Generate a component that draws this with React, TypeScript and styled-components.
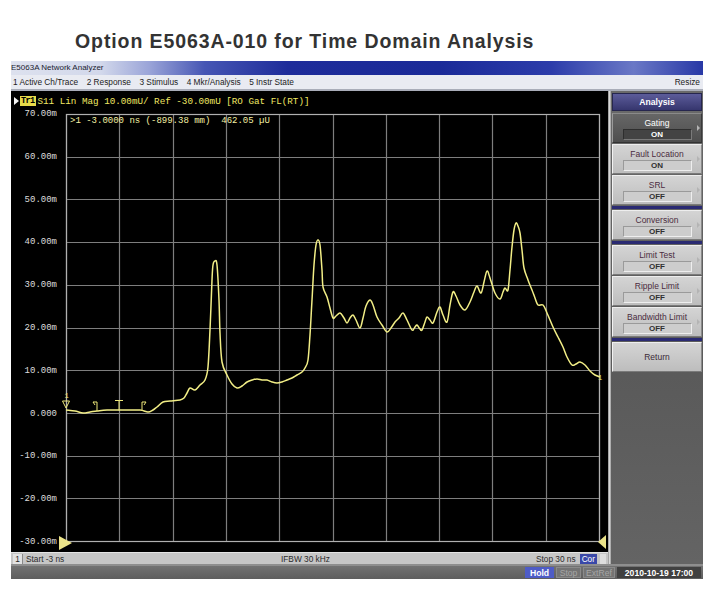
import React from "react";
import styled, { createGlobalStyle } from "styled-components";

const UI_FONT = `"Liberation Sans", Arial, sans-serif`;
const MONO_FONT = `"Liberation Mono", "DejaVu Sans Mono", monospace`;

// plot geometry (page pixels)
const PLOT_X = 66;
const PLOT_Y = 114;
const PLOT_W = 533;
const PLOT_H = 427;
const DIVS = 10;

const Y_LABELS = [
  "70.00m",
  "60.00m",
  "50.00m",
  "40.00m",
  "30.00m",
  "20.00m",
  "10.00m",
  "0.000",
  "-10.00m",
  "-20.00m",
  "-30.00m",
];

const MENU_ITEMS = [
  "1 Active Ch/Trace",
  "2 Response",
  "3 Stimulus",
  "4 Mkr/Analysis",
  "5 Instr State",
];

const SOFT_KEYS = [
  { label: "Gating", value: "ON", active: true },
  { label: "Fault Location", value: "ON" },
  { label: "SRL", value: "OFF", separatorAfter: true },
  { label: "Conversion", value: "OFF", separatorAfter: true },
  { label: "Limit Test", value: "OFF" },
  { label: "Ripple Limit", value: "OFF" },
  { label: "Bandwidth Limit", value: "OFF", separatorAfter: true },
];

// trace read off the screen, in page pixels
const TRACE: [number, number][] = [
  [66, 410], [75, 411], [83, 413], [90, 412], [97, 411], [107, 410],
  [125, 410], [140, 410], [148, 412], [153, 410], [157, 407], [163, 402],
  [170, 401], [180, 400], [184, 398], [187, 393], [190, 388], [195, 390],
  [200, 385], [205, 380], [208, 367], [210, 330], [212, 280], [213, 265],
  [215, 261], [217, 265], [219, 300], [220, 333], [222, 362], [227, 375],
  [232, 384], [237, 388], [242, 386], [247, 382], [252, 380], [257, 379],
  [262, 380], [267, 380], [272, 382], [277, 383], [282, 382], [287, 380],
  [292, 378], [297, 375], [302, 372], [305, 368], [308, 360], [310, 335],
  [312, 300], [314, 265], [316, 245], [318, 240], [320, 245], [322, 270],
  [323, 287], [327, 297], [330, 308], [333, 318], [336, 316], [340, 313],
  [344, 318], [347, 323], [350, 318], [353, 315], [356, 320], [360, 328],
  [363, 318], [366, 306], [370, 300], [373, 305], [377, 317], [382, 325],
  [387, 332], [391, 328], [395, 322], [399, 318], [403, 313], [407, 320],
  [412, 330], [415, 327], [417, 325], [420, 329], [422, 330], [425, 322],
  [427, 317], [430, 320], [433, 323], [437, 312], [440, 307], [443, 315],
  [447, 322], [450, 305], [453, 292], [456, 296], [460, 305], [465, 310],
  [470, 302], [474, 292], [477, 286], [481, 293], [484, 282], [487, 271],
  [490, 278], [495, 293], [500, 299], [503, 292], [505, 288], [508, 290],
  [510, 270], [512, 247], [514, 230], [516, 223], [518, 226], [520, 233],
  [522, 250], [524, 268], [528, 280], [532, 290], [535, 298], [538, 305],
  [543, 305], [547, 313], [553, 327], [558, 337], [563, 347], [567, 357],
  [572, 365], [576, 364], [580, 362], [585, 365], [590, 371], [595, 375],
  [600, 377],
];

const smoothPath = (pts: [number, number][]) => {
  const p = pts.map(([x, y]) => [x - PLOT_X, y - PLOT_Y]);
  let d = `M${p[0][0]},${p[0][1]}`;
  for (let i = 0; i < p.length - 1; i++) {
    const p0 = p[i - 1] || p[i];
    const p1 = p[i];
    const p2 = p[i + 1];
    const p3 = p[i + 2] || p2;
    const c1x = p1[0] + (p2[0] - p0[0]) / 6;
    const c1y = p1[1] + (p2[1] - p0[1]) / 6;
    const c2x = p2[0] - (p3[0] - p1[0]) / 6;
    const c2y = p2[1] - (p3[1] - p1[1]) / 6;
    d += ` C${c1x.toFixed(1)},${c1y.toFixed(1)} ${c2x.toFixed(1)},${c2y.toFixed(
      1
    )} ${p2[0]},${p2[1]}`;
  }
  return d;
};

const GlobalStyle = createGlobalStyle`
  html, body {
    margin: 0;
    padding: 0;
    background: #ffffff;
  }
  body {
    font-family: ${UI_FONT};
  }
`;

const Page = styled.div`
  width: 716px;
  height: 600px;
  overflow: hidden;
  background: #ffffff;
`;

const Heading = styled.h1`
  margin: 0 0 10px 75px;
  padding-top: 31px;
  font-size: 19.5px;
  line-height: 20px;
  letter-spacing: 0.9px;
  font-weight: bold;
  color: #333333;
`;

const Window = styled.div`
  margin-left: 11px;
  width: 692px;
  display: flex;
  flex-direction: column;
`;

const TitleBar = styled.div`
  height: 14px;
  line-height: 14px;
  font-size: 8px;
  color: #1c1c30;
  background: linear-gradient(
    to right,
    #dde1ee 0%,
    #d2d8eb 13%,
    #9aa4d8 20%,
    #4656b4 28%,
    #1e2c9a 40%,
    #1a2a98 62%,
    #2c3caa 78%,
    #6a78c6 90%,
    #2838a6 100%
  );
`;

const MenuBar = styled.div`
  height: 14px;
  display: flex;
  align-items: center;
  gap: 8.5px;
  padding: 0 3px 0 2px;
  background: #e9ebf2;
  border-bottom: 2px solid #a9adb9;
  font-size: 8.3px;
  color: #222222;
`;

const MenuItem = styled.span<{ $right?: boolean }>`
  white-space: nowrap;
  margin-left: ${(p) => (p.$right ? "auto" : "0")};
`;

const MainRow = styled.div`
  display: flex;
  height: 473px;
`;

const LeftColumn = styled.div`
  width: 597px;
  display: flex;
  flex-direction: column;
`;

const Screen = styled.div`
  height: 461px;
  background: #000000;
  display: flex;
  flex-direction: column;
`;

const TraceHeader = styled.div`
  height: 12px;
  padding: 4px 0 2px 3px;
  display: flex;
  align-items: center;
  font-family: ${MONO_FONT};
  font-size: 9.25px;
  color: #f0e864;
  white-space: pre;
`;

const ActiveArrow = styled.span`
  width: 0;
  height: 0;
  border-left: 5px solid #f4f4f4;
  border-top: 4px solid transparent;
  border-bottom: 4px solid transparent;
  margin-right: 1px;
`;

const TraceTag = styled.span`
  background: #e8dc4a;
  color: #000000;
  font-weight: bold;
  font-size: 8.5px;
  letter-spacing: -0.6px;
  line-height: 10px;
  padding: 0 1px;
  margin-right: 2px;
`;

const ChartRow = styled.div`
  display: flex;
  height: 438px;
`;

const YAxis = styled.div`
  width: 55px;
  box-sizing: border-box;
  padding-right: 9px;
  display: flex;
  flex-direction: column;
  justify-content: space-between;
  align-items: flex-end;
`;

const YLabel = styled.span`
  font-family: ${MONO_FONT};
  font-size: 9px;
  line-height: 10px;
  color: #dedede;
  white-space: pre;
`;

const PlotWrap = styled.div`
  position: relative;
  padding: 5px 0;

  svg {
    display: block;
    overflow: visible;
  }
`;

const MarkerReadout = styled.div`
  position: absolute;
  left: 4px;
  top: 7px;
  font-family: ${MONO_FONT};
  font-size: 9px;
  line-height: 10px;
  color: #f4f0a4;
  white-space: pre;
`;

const StatusLine = styled.div`
  height: 12px;
  box-sizing: border-box;
  border-top: 1px solid #e4e4e4;
  background: #c6c6c6;
  display: flex;
  align-items: center;
  font-size: 8.3px;
  color: #2a2a2a;
  white-space: nowrap;
`;

const ChannelBox = styled.span`
  width: 9px;
  height: 10px;
  margin-left: 2px;
  background: #e2e2e2;
  border-right: 1px solid #8a8a8a;
  line-height: 10px;
  text-align: center;
`;

const StatusCell = styled.span<{ $width?: number }>`
  ${(p) => (p.$width ? `width: ${p.$width}px;` : "flex: 1;")}
  padding-left: 3px;
  box-sizing: border-box;
`;

const CorBox = styled.span`
  margin: 0 3px 0 4px;
  padding: 0 2px;
  line-height: 10px;
  background: #3a48a8;
  color: #ffffff;
`;

const TinyBox = styled.span`
  width: 6px;
  height: 10px;
  background: #dedede;
  margin-right: 2px;
`;

const Divider = styled.div`
  width: 3px;
  background: linear-gradient(to right, #8c8c8c, #d8d8d8, #9a9a9a);
`;

const SoftKeyPanel = styled.div`
  width: 92px;
  box-sizing: border-box;
  padding: 2px 1px 0;
  background: linear-gradient(#6a6a6a, #5a5a5a 60%, #646464);
  display: flex;
  flex-direction: column;
`;

const PanelTitle = styled.div`
  height: 18px;
  box-sizing: border-box;
  border: 1px solid #26264e;
  background: linear-gradient(#5c5c9a, #36366e);
  color: #ffffff;
  font-size: 8.6px;
  font-weight: bold;
  line-height: 16px;
  text-align: center;
  margin-bottom: 1px;
`;

const SoftKey = styled.div<{ $active?: boolean }>`
  position: relative;
  height: 30px;
  margin-top: 1px;
  box-sizing: border-box;
  padding-top: 4px;
  display: flex;
  flex-direction: column;
  align-items: center;
  border: 1px solid;
  border-color: ${(p) =>
    p.$active ? "#8a8a8a #3a3a3a #333333 #9a9a9a" : "#eeeeee #8a8a8a #7a7a7a #f2f2f2"};
  background: ${(p) =>
    p.$active
      ? "linear-gradient(#666666, #4e4e4e)"
      : "linear-gradient(#d4d4d4, #bdbdbd)"};
  color: ${(p) => (p.$active ? "#ffffff" : "#4a2c40")};
  font-size: 8.5px;
  line-height: 10px;
  white-space: nowrap;
`;

const KeyValue = styled.div<{ $active?: boolean }>`
  width: 69px;
  height: 11px;
  box-sizing: border-box;
  margin-top: 1px;
  border: 1px solid;
  border-color: ${(p) =>
    p.$active ? "#2e2e2e #7a7a7a #7a7a7a #2e2e2e" : "#9a9a9a #eeeeee #eeeeee #9a9a9a"};
  background: ${(p) => (p.$active ? "#434343" : "#cdcdcd")};
  color: ${(p) => (p.$active ? "#ffffff" : "#303030")};
  font-size: 8px;
  font-weight: bold;
  line-height: 9px;
  text-align: center;
`;

const KeyArrow = styled.span`
  position: absolute;
  right: 1px;
  top: 11px;
  width: 0;
  height: 0;
  border-left: 3px solid #b4b4b4;
  border-top: 3.5px solid transparent;
  border-bottom: 3.5px solid transparent;
`;

const ReturnKey = styled(SoftKey)`
  padding-top: 0;
  justify-content: center;
  color: #3a2a36;
`;

const KeySeparator = styled.div`
  height: 3px;
  margin-top: 1px;
  background: #2a2a72;
`;

const BottomBar = styled.div`
  height: 15px;
  box-sizing: border-box;
  border-top: 2px solid #8e8e8e;
  background: linear-gradient(#727272, #5e5e5e);
  display: flex;
  justify-content: flex-end;
  align-items: center;
  gap: 2px;
  padding-right: 2px;
  font-size: 8.6px;
  white-space: nowrap;
`;

const BarItem = styled.span<{ $width: number; $tone: "hold" | "dim" | "date" }>`
  width: ${(p) => p.$width}px;
  height: 11px;
  line-height: 11px;
  text-align: center;
  box-sizing: border-box;
  font-weight: ${(p) => (p.$tone === "dim" ? "normal" : "bold")};
  color: ${(p) => (p.$tone === "dim" ? "#a6a6a6" : "#ffffff")};
  background: ${(p) =>
    p.$tone === "hold" ? "#4e5cc6" : p.$tone === "date" ? "#404040" : "#747474"};
  border: 1px solid ${(p) => (p.$tone === "dim" ? "#8a8a8a" : "transparent")};
`;

const Chart = () => {
  const cols = Array.from({ length: DIVS + 1 }, (_, i) =>
    Math.round((i * PLOT_W) / DIVS)
  );
  const rows = Array.from({ length: DIVS + 1 }, (_, i) =>
    Math.round((i * PLOT_H) / DIVS)
  );
  const yellow = "#eee87a";

  return (
    <svg width={542} height={428} viewBox="0 0 542 428">
      {cols.map((x) => (
        <line
          key={`v${x}`}
          x1={x + 0.5}
          y1={0}
          x2={x + 0.5}
          y2={PLOT_H + 1}
          stroke="#7e7e7e"
          strokeWidth={1.2}
        />
      ))}
      {rows.map((y) => (
        <line
          key={`h${y}`}
          x1={0}
          y1={y + 0.5}
          x2={PLOT_W + 1}
          y2={y + 0.5}
          stroke="#7e7e7e"
          strokeWidth={1.2}
        />
      ))}
      <rect
        x={0.5}
        y={0.5}
        width={PLOT_W}
        height={PLOT_H}
        fill="none"
        stroke="#b0b0b0"
        strokeWidth={1.2}
      />

      <path d={smoothPath(TRACE)} fill="none" stroke="#f2ee86" strokeWidth={1.5} />

      {/* marker 1 */}
      <text x={-1.5} y={284} fontSize={7} fill={yellow} fontFamily={MONO_FONT}>
        1
      </text>
      <polygon points="-3.5,287 3.5,287 0,294" fill="none" stroke={yellow} strokeWidth={1} />

      {/* gate markers */}
      <path d="M27,288 h4 v9 M27,288 l2,3" fill="none" stroke={yellow} strokeWidth={1} />
      <path d="M49,286.5 h8 M53,286.5 v10" fill="none" stroke={yellow} strokeWidth={1} />
      <path d="M76,297 v-9 h4 l-2,3" fill="none" stroke={yellow} strokeWidth={1} />

      {/* trace end label */}
      <text x={532} y={266} fontSize={7} fill={yellow} fontFamily={MONO_FONT}>
        1
      </text>

      {/* reference position markers */}
      <polygon points="-7,422 6,429 -7,436" fill="#ece48a" />
      <polygon points="540,421 532,428 540,435" fill="#ece48a" />
    </svg>
  );
};

export default function App() {
  return (
    <Page>
      <GlobalStyle />
      <Heading>Option E5063A-010 for Time Domain Analysis</Heading>

      <Window>
        <TitleBar>E5063A Network Analyzer</TitleBar>

        <MenuBar>
          {MENU_ITEMS.map((item) => (
            <MenuItem key={item}>{item}</MenuItem>
          ))}
          <MenuItem $right>Resize</MenuItem>
        </MenuBar>

        <MainRow>
          <LeftColumn>
            <Screen>
              <TraceHeader>
                <ActiveArrow />
                <TraceTag>Tr1</TraceTag>
                S11 Lin Mag 10.00mU/ Ref -30.00mU [RO Gat FL(RT)]
              </TraceHeader>

              <ChartRow>
                <YAxis>
                  {Y_LABELS.map((label) => (
                    <YLabel key={label}>{label}</YLabel>
                  ))}
                </YAxis>
                <PlotWrap>
                  <Chart />
                  <MarkerReadout>
                    {">1 -3.0000 ns (-899.38 mm)  462.05 \u00b5U"}
                  </MarkerReadout>
                </PlotWrap>
              </ChartRow>
            </Screen>

            <StatusLine>
              <ChannelBox>1</ChannelBox>
              <StatusCell $width={255}>Start -3 ns</StatusCell>
              <StatusCell>IFBW 30 kHz</StatusCell>
              <span>Stop 30 ns</span>
              <CorBox>Cor</CorBox>
              <TinyBox />
            </StatusLine>
          </LeftColumn>

          <Divider />

          <SoftKeyPanel>
            <PanelTitle>Analysis</PanelTitle>
            {SOFT_KEYS.map((key) => (
              <React.Fragment key={key.label}>
                <SoftKey $active={key.active}>
                  {key.label}
                  <KeyValue $active={key.active}>{key.value}</KeyValue>
                  <KeyArrow />
                </SoftKey>
                {key.separatorAfter && <KeySeparator />}
              </React.Fragment>
            ))}
            <ReturnKey>Return</ReturnKey>
          </SoftKeyPanel>
        </MainRow>

        <BottomBar>
          <BarItem $width={29} $tone="hold">
            Hold
          </BarItem>
          <BarItem $width={25} $tone="dim">
            Stop
          </BarItem>
          <BarItem $width={32} $tone="dim">
            ExtRef
          </BarItem>
          <BarItem $width={84} $tone="date">
            2010-10-19 17:00
          </BarItem>
        </BottomBar>
      </Window>
    </Page>
  );
}
